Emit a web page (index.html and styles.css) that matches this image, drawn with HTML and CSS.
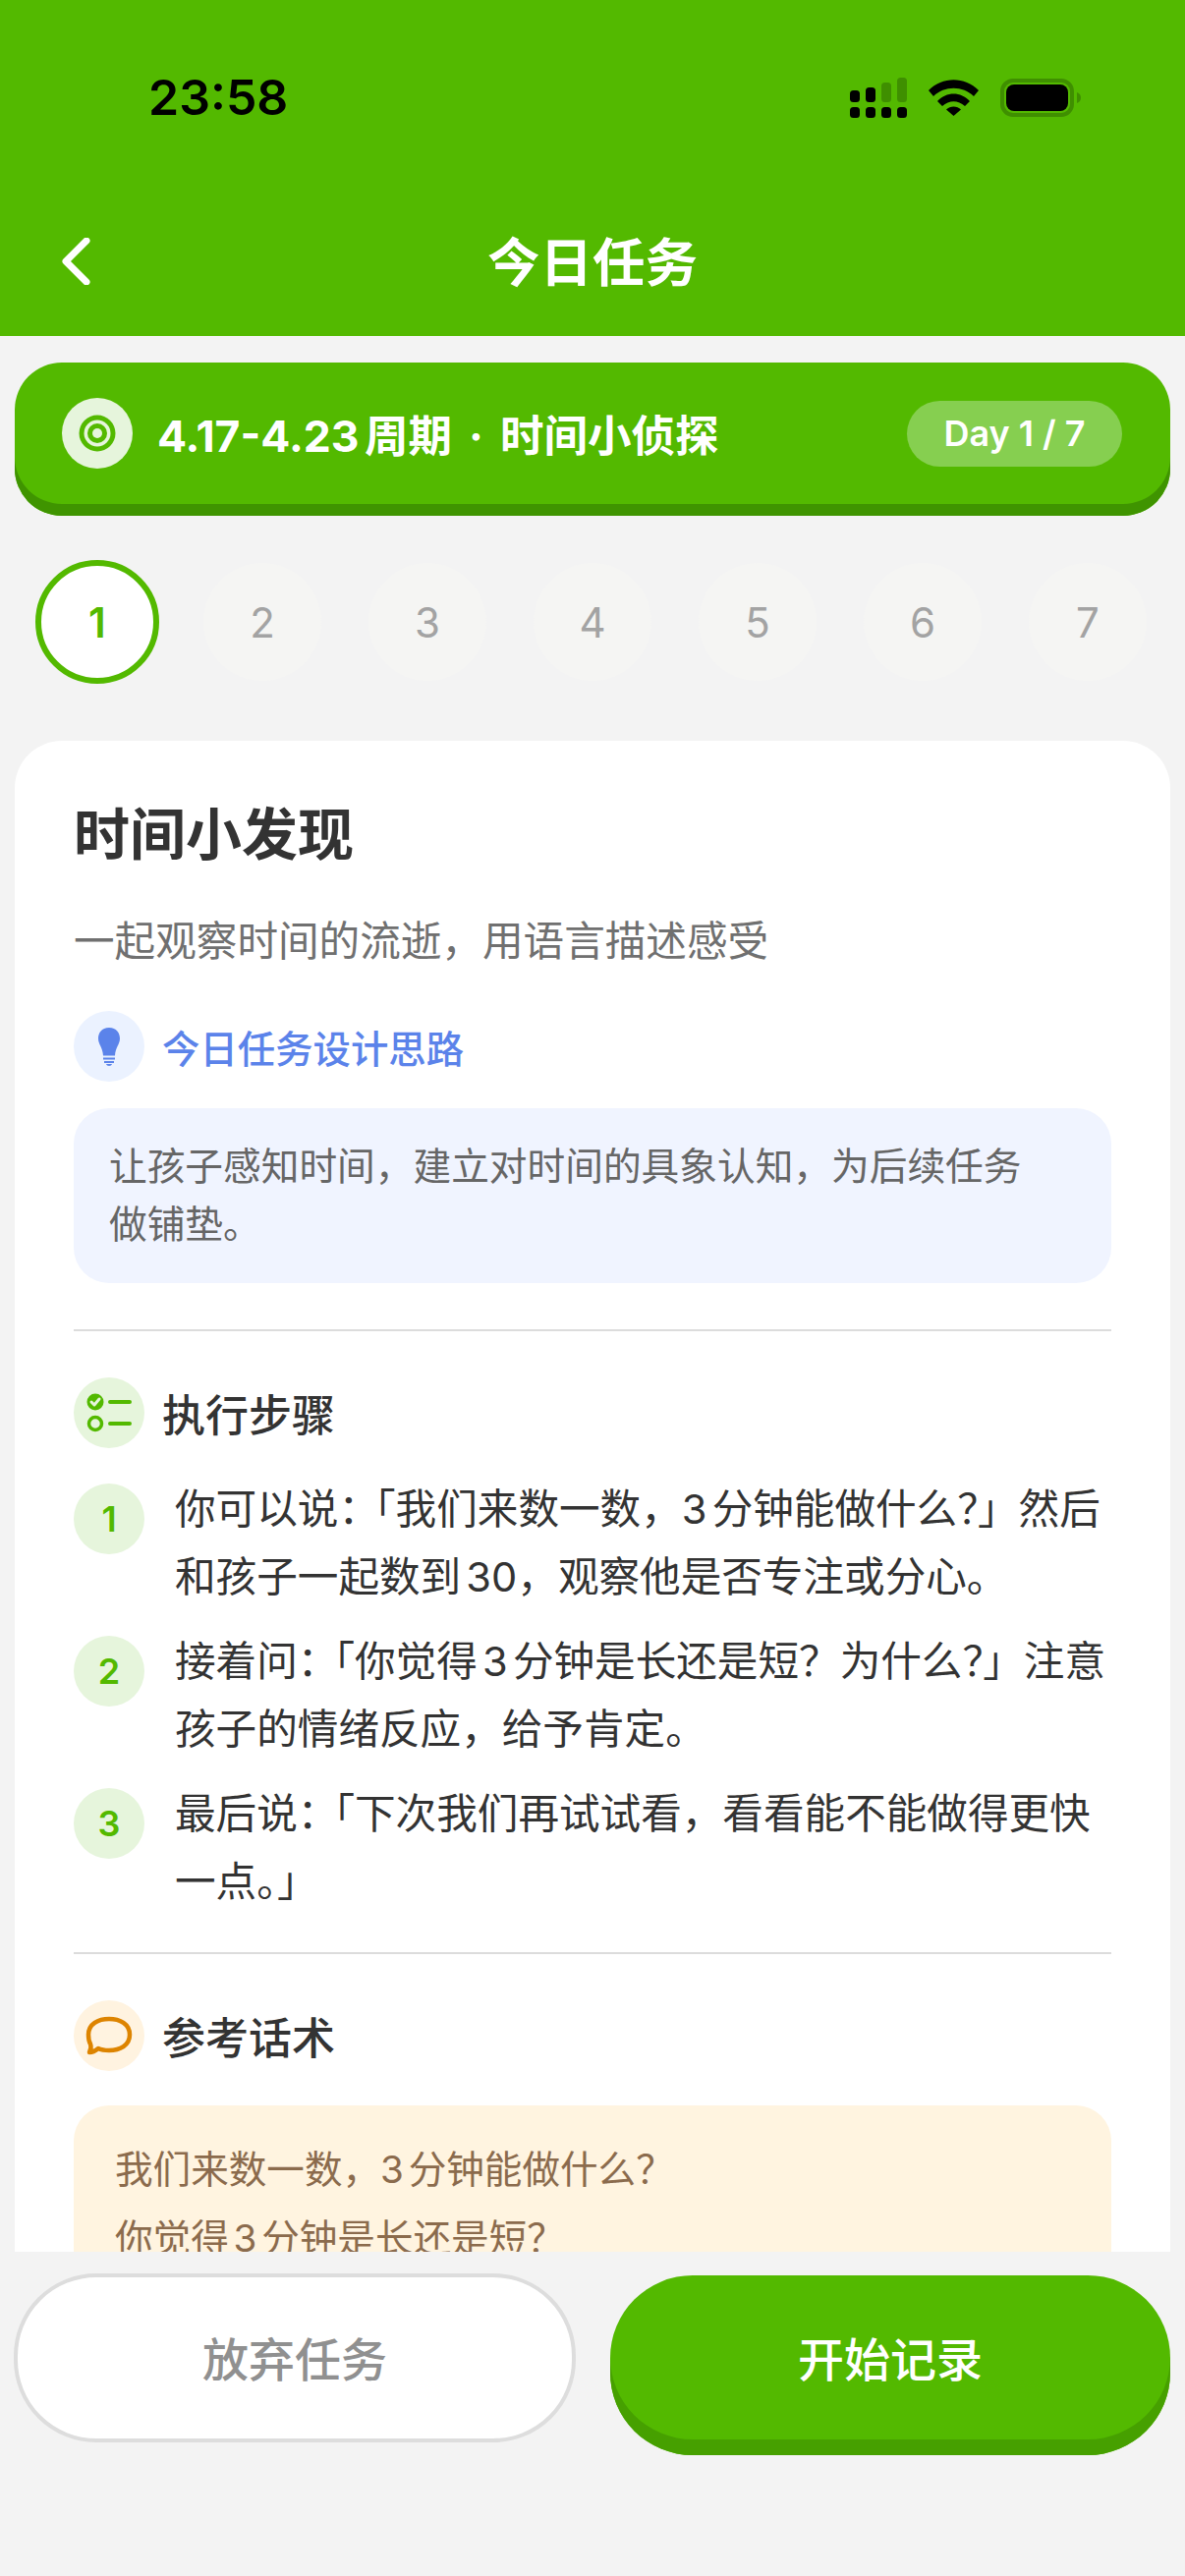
FILE: index.html
```html
<!DOCTYPE html>
<html lang="zh-CN">
<head>
    <meta charset="UTF-8">
    <title>今日任务</title>
    <link rel="stylesheet" href="styles.css">
</head>
<body>

<div class="page">
    <div class="top">
        <div class="status">
            <span class="time">23:58</span>
            <div class="status-icons">
                <svg class="signal" width="58" height="41" viewBox="0 0 58 41">
                    <rect x="0" y="13" width="10" height="12" rx="3.5"/>
                    <rect x="16" y="10" width="10" height="15" rx="3.5"/>
                    <rect class="dim" x="32" y="5" width="10" height="20" rx="3.5"/>
                    <rect class="dim" x="48" y="0" width="10" height="25" rx="3.5"/>
                    <rect x="0" y="30" width="10" height="11" rx="3.5"/>
                    <rect x="16" y="30" width="10" height="11" rx="3.5"/>
                    <rect x="32" y="30" width="10" height="11" rx="3.5"/>
                    <rect x="48" y="30" width="10" height="11" rx="3.5"/>
                </svg>
                <svg class="wifi" width="51" height="37" viewBox="0 0 51 37">
                    <path d="M0 11C14-3.500 37-3.500 51 11L46 17C35 6 16 6 5 17Z"/>
                    <path d="M9 22C18 12 33 12 42 22L37 27C30 20.500 21 20.500 14 27Z"/>
                    <path d="M18 30.500C22 26.500 29 26.500 33 30.500L25.500 37Z"/>
                </svg>
                <svg class="battery" width="82" height="39" viewBox="0 0 82 39">
                    <rect class="shell" x="2" y="2" width="71" height="35" rx="11"/>
                    <rect x="6" y="6" width="63" height="27" rx="8"/>
                    <path class="dim" d="M78 14C81 15 82 17 82 19.500C82 22 81 24 78 25Z"/>
                </svg>
            </div>
        </div>
        <div class="nav">
            <svg class="back" width="30" height="48" viewBox="0 0 30 48">
                <path d="M26 3L5 24L26 45"/>
            </svg>
            <h1>今日任务</h1>
        </div>
    </div>

    <div class="banner">
        <div class="banner-icon">
            <svg width="40" height="40" viewBox="0 0 40 40">
                <circle class="g" cx="20" cy="20" r="18.500"/>
                <circle class="l" cx="20" cy="20" r="13.500"/>
                <circle class="g" cx="20" cy="20" r="10"/>
                <circle class="l" cx="20" cy="20" r="5"/>
            </svg>
        </div>
        <div class="banner-title">4.17-4.23周期<span class="dot">·</span>时间小侦探</div>
        <div class="day-pill">Day 1 / 7</div>
    </div>

    <ul class="days">
        <li class="cur">1</li>
        <li>2</li>
        <li>3</li>
        <li>4</li>
        <li>5</li>
        <li>6</li>
        <li>7</li>
    </ul>

    <div class="scroll">
        <div class="card">
            <h2>时间小发现</h2>
            <p class="sub">一起观察时间的流逝，用语言描述感受</p>

            <div class="sec-head">
                <span class="sec-icon blue">
                    <svg width="72" height="72" viewBox="0 0 72 72">
                        <path class="bulb" d="M36 17C28.500 17 25 22.500 25 28C25 34 29.500 37 30 45.500H42C42.500 37 47 34 47 28C47 22.500 43.500 17 36 17Z"/>
                        <path class="bulb-line" d="M30 48.500H42M31 52H41"/>
                        <path class="bulb" d="M33 54H39C38.500 56.500 33.500 56.500 33 54Z"/>
                    </svg>
                </span>
                <span class="sec-title blue-text">今日任务设计思路</span>
            </div>
            <div class="note">让孩子感知时间，建立对时间的具象认知，为后续任务做铺垫。</div>

            <div class="line"></div>

            <div class="sec-head">
                <span class="sec-icon green">
                    <svg width="72" height="72" viewBox="0 0 72 72">
                        <circle class="fill-g" cx="22" cy="25" r="8.500"/>
                        <path class="tick" d="M18 25L21 28L26 22"/>
                        <circle class="ring-g" cx="22" cy="47" r="6.500"/>
                        <path class="bar-g" d="M37 25H57M37 47H57"/>
                    </svg>
                </span>
                <span class="sec-title">执行步骤</span>
            </div>
            <ol class="steps">
                <li><span class="num">1</span><p>你可以说<span class="colon">：</span>「我们来数一数，3分钟能做什么<span class="tight">？</span>」然后和孩子一起数到30，观察他是否专注或分心。</p></li>
                <li><span class="num">2</span><p>接着问<span class="colon">：</span>「你觉得3分钟是长还是短？为什么<span class="tight">？</span>」注意孩子的情绪反应，给予肯定。</p></li>
                <li><span class="num">3</span><p>最后说<span class="colon">：</span>「下次我们再试试看，看看能不能做得更快一点。」</p></li>
            </ol>

            <div class="line after-steps"></div>

            <div class="sec-head">
                <span class="sec-icon orange">
                    <svg width="72" height="72" viewBox="0 0 72 72">
                        <path class="chat" d="M36 19C47 19 57 24 57 35C57 46 47 51 36 51C32 51 28 50.500 25 49C22 51.500 19 53 16 53C17.500 50 18 47 17 44.500C15.500 42 15 38.500 15 35C15 24 25 19 36 19Z"/>
                    </svg>
                </span>
                <span class="sec-title">参考话术</span>
            </div>
            <div class="script-box">
                <p>我们来数一数，3分钟能做什么？</p>
                <p>你觉得3分钟是长还是短？</p>
            </div>
        </div>
    </div>

    <div class="bottom">
        <div class="btn btn-off">放弃任务</div>
        <div class="btn btn-on">开始记录</div>
    </div>
</div>

</body>
</html>
```

FILE: styles.css
```css
*{
    margin: 0px;
    padding: 0px;
    box-sizing: border-box;
}
ul,ol{
    list-style: none;
}
body{
    background-color: #f3f3f3;
    font-family: Inter, "Noto Sans CJK SC", sans-serif;
    color: #333;
    text-autospace: normal;
}
.page{
    width: 1206px;
    height: 2622px;
    display: flex;
    flex-direction: column;
    overflow: hidden;
}

/* header */
.top{
    height: 342px;
    background-color: #53b900;
    padding-top: 66px;
}
.status{
    height: 66px;
    display: flex;
    align-items: center;
    justify-content: space-between;
    padding: 0px 106px 0px 151px;
}
.time{
    font-size: 50px;
    font-weight: 600;
    color: #000;
}
.status-icons{
    display: flex;
    align-items: center;
    gap: 22px;
}
.status-icons .dim{
    fill: #3f8f00;
}
.battery .shell{
    fill: none;
    stroke: #3f8f00;
    stroke-width: 4;
}
.nav{
    height: 96px;
    margin-top: 83px;
    position: relative;
    display: flex;
    align-items: center;
    justify-content: center;
}
.nav h1{
    font-size: 53.500px;
    font-weight: 700;
    color: #fff;
}
.back{
    position: absolute;
    left: 62px;
    top: 27px;
}
.back path{
    fill: none;
    stroke: #fff;
    stroke-width: 7;
    stroke-linecap: round;
    stroke-linejoin: round;
}

/* banner */
.banner{
    height: 156px;
    margin: 27px 15px 0px;
    padding: 0px 49px 12px 48px;
    background-color: #53b900;
    border-radius: 48px;
    box-shadow: inset 0px -12px 0px #3f9400;
    display: flex;
    align-items: center;
}
.banner-icon{
    width: 72px;
    height: 72px;
    border-radius: 50%;
    background-color: #e6f5dc;
    display: flex;
    align-items: center;
    justify-content: center;
}
.banner-icon .g{
    fill: #53b900;
}
.banner-icon .l{
    fill: #e6f5dc;
}
.banner-title{
    flex: 1;
    margin-left: 25px;
    padding-bottom: 2px;
    font-size: 44.500px;
    font-weight: 700;
    color: #fff;
}
.dot{
    margin: 0px 17px;
}
.day-pill{
    width: 219px;
    height: 67px;
    border-radius: 34px;
    background-color: #86cf50;
    color: #fff;
    font-size: 36px;
    font-weight: 600;
    text-align: center;
    line-height: 67px;
}

/* days */
.days{
    display: flex;
    align-items: center;
    gap: 48px;
    margin-top: 45px;
    padding-left: 36px;
}
.days li{
    width: 120px;
    height: 120px;
    border-radius: 50%;
    background-color: #f5f5f3;
    color: #a3a3a3;
    font-size: 42px;
    display: flex;
    align-items: center;
    justify-content: center;
}
.days li.cur{
    width: 126px;
    height: 126px;
    margin-right: -3px;
    background-color: #fff;
    border: 6px solid #53b900;
    color: #53b900;
    font-weight: 600;
}

/* card */
.scroll{
    height: 1538px;
    margin: 58px 15px 0px;
    overflow: hidden;
}
.card{
    background-color: #fff;
    border-radius: 48px;
    padding: 60px 60px 60px;
}
.card h2{
    font-size: 57px;
    line-height: 72px;
    font-weight: 700;
    color: #333;
}
.sub{
    margin-top: 42px;
    font-size: 41.600px;
    line-height: 60px;
    color: #707070;
}
.sec-head{
    display: flex;
    align-items: center;
    gap: 18px;
}
.sub + .sec-head{
    margin-top: 41px;
}
.sec-icon{
    width: 72px;
    height: 72px;
    border-radius: 50%;
}
.sec-icon.blue{
    background-color: #ebf2ff;
}
.sec-icon.green{
    background-color: #e6f5dc;
}
.sec-icon.orange{
    background-color: #fff3e0;
}
.sec-title{
    font-size: 44px;
    font-weight: 500;
    color: #333;
}
.sec-title.blue-text{
    font-size: 38.400px;
    color: #5b83ea;
}
.bulb{
    fill: #5b83ea;
}
.bulb-line{
    fill: none;
    stroke: #5b83ea;
    stroke-width: 2;
}
.fill-g{
    fill: #53b900;
}
.tick{
    fill: none;
    stroke: #e6f5dc;
    stroke-width: 3;
    stroke-linecap: round;
    stroke-linejoin: round;
}
.ring-g{
    fill: none;
    stroke: #53b900;
    stroke-width: 3.500;
}
.bar-g{
    fill: none;
    stroke: #53b900;
    stroke-width: 4;
    stroke-linecap: round;
}
.chat{
    fill: none;
    stroke: #dd8400;
    stroke-width: 4.500;
    stroke-linejoin: round;
}
.note{
    margin-top: 27px;
    padding: 30px 60px 30px 36px;
    background-color: #f0f4ff;
    border-radius: 36px;
    font-size: 38.700px;
    line-height: 59px;
    color: #666;
}
.line{
    height: 2px;
    margin: 47px 0px;
    background-color: #dcdcdc;
}
.line.after-steps{
    margin-top: 37px;
}
.steps{
    margin-top: 28px;
}
.steps li{
    display: flex;
    gap: 31px;
    margin-bottom: 17px;
}
.steps li:last-child{
    margin-bottom: 0px;
}
.num{
    flex: none;
    width: 72px;
    height: 72px;
    margin-top: 8px;
    border-radius: 50%;
    background-color: #e6f5dc;
    color: #53b900;
    font-size: 36px;
    font-weight: 600;
    display: flex;
    align-items: center;
    justify-content: center;
}
.steps p{
    font-size: 41.600px;
    line-height: 69px;
    color: #333;
}
.tight{
    font-feature-settings: "halt";
}
.colon{
    font-feature-settings: "halt";
    margin-right: 0.4em;
}
.script-box{
    margin-top: 35px;
    padding: 30px 42px;
    background-color: #fff4e0;
    border-radius: 36px;
    font-size: 38.600px;
    line-height: 70px;
    color: #8b6b4d;
}

/* buttons */
.bottom{
    display: flex;
    gap: 35px;
    margin-top: 22px;
    padding-left: 14px;
}
.btn{
    flex: 0 0 572px;
    height: 172px;
    border-radius: 84px;
    font-size: 47px;
    font-weight: 500;
    display: flex;
    align-items: center;
    justify-content: center;
}
.btn-off{
    padding-bottom: 3px;
    background-color: #fff;
    border: 4px solid #ddd;
    color: #909090;
}
.btn-on{
    flex-basis: 570px;
    height: 183px;
    margin-top: 2px;
    padding-bottom: 18px;
    background-color: #53b900;
    box-shadow: inset 0px -16px 0px #46a000;
    color: #fff;
}
```
